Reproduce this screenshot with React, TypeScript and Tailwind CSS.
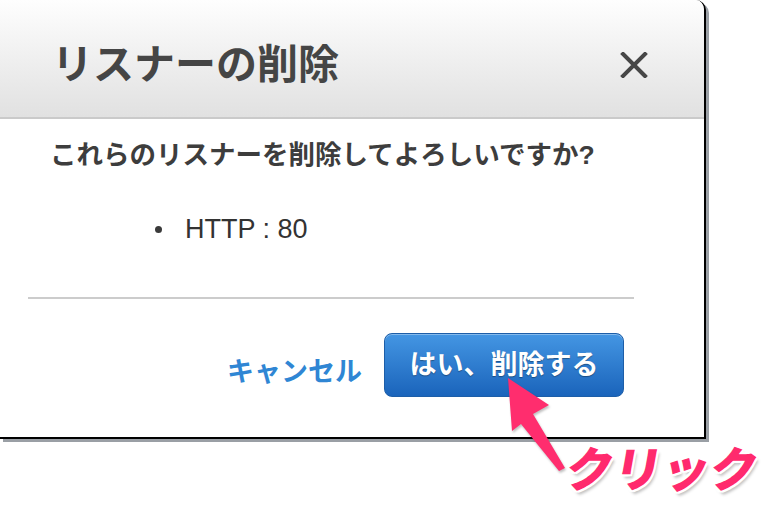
import React from "react"

const jp = { fontFamily: '"Liberation Sans", "Noto Sans CJK JP", sans-serif' }

function CloseIcon() {
  return (
    <svg width="28" height="26" viewBox="0 0 28 26" className="block">
      <path d="M3 2 L25 24 M25 2 L3 24" stroke="#474747" strokeWidth="4" strokeLinecap="square" />
    </svg>
  )
}

export default function App() {
  return (
    <div className="relative w-[782px] h-[524px] bg-white overflow-hidden" style={jp}>
      <div className="w-[706px] h-[439px] flex flex-col bg-white border-r-2 border-b-2 border-black rounded-tr-[10px] shadow-[3px_3px_0_#9a9fa5] overflow-hidden">
        <div className="h-[119px] shrink-0 flex items-center justify-between pt-[12px] pl-[52px] pr-[56px] bg-gradient-to-b from-[#fefefe] to-[#e1e1e1] border-b-2 border-[#cacaca]">
          <h1 className="text-[41px] leading-[48px] font-bold text-[#454545]">リスナーの削除</h1>
          <CloseIcon />
        </div>

        <p className="mt-[18px] pl-[50px] text-[26.5px] leading-[36px] font-bold text-[#3d3d3d]">
          これらのリスナーを削除してよろしいですか?
        </p>

        <ul className="mt-[38px] pl-[155px]">
          <li className="flex items-center text-[27px] leading-[36px] text-[#333333]">
            <span className="w-[7px] h-[7px] mr-[23px] rounded-full bg-[#3a3a3a]" />
            <span>HTTP : 80</span>
          </li>
        </ul>

        <div className="mt-[50px] ml-[28px] w-[606px] h-[2px] bg-[#cccccc]" />

        <div className="mt-[34px] flex items-center justify-end pr-[80px] gap-[22px]">
          <span className="pt-[14px] text-[27px] leading-[36px] font-bold text-[#2f86d4]">キャンセル</span>
          <button className="w-[240px] h-[64px] flex items-center justify-center rounded-[8px] border border-[#1d5ea8] bg-gradient-to-b from-[#4496e3] to-[#1a64bb] shadow-[inset_0_1px_0_rgba(255,255,255,0.35)] text-[27px] font-bold text-white [text-shadow:0_1px_1px_rgba(0,0,0,0.35)]">
            はい、削除する
          </button>
        </div>
      </div>

      <svg className="absolute inset-0 pointer-events-none" width="782" height="524" viewBox="0 0 782 524">
        <polygon
          points="508,378 549,405 533,414 565,468 559,471 521,424 512,431"
          fill="#ff2d6e"
          style={{ filter: "drop-shadow(1px 2px 1px rgba(0,0,0,0.25))" }}
        />
      </svg>

      <div className="absolute left-[566px] top-[440px] -skew-x-[10deg] text-[48px] leading-[62px] font-black text-[#ff2a6d] [text-shadow:2px_0_0_#fff,-2px_0_0_#fff,0_2px_0_#fff,0_-2px_0_#fff,2px_2px_0_#fff,-2px_-2px_0_#fff,2px_-2px_0_#fff,-2px_2px_0_#fff,3px_4px_3px_rgba(0,0,0,0.25)]">
        クリック
      </div>
    </div>
  )
}
